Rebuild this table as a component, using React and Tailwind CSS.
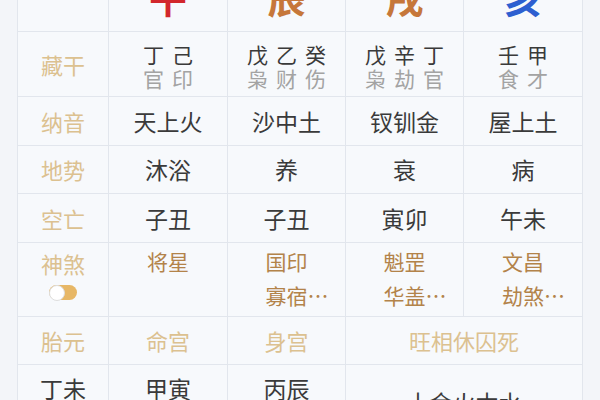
const line = "border-r border-b border-[#e2e6ed]";

function Cell({ children, className = "" }) {
  return (
    <div className={`${line} flex flex-col items-center justify-center ${className}`}>
      {children}
    </div>
  );
}

function Label({ children }) {
  return <Cell className="text-[22px] text-[#dcc190]">{children}</Cell>;
}

function Stems({ main, sub }) {
  return (
    <Cell className="h-[65px] pt-[4px] gap-[2px]">
      <div className="text-[21px] leading-[22px] tracking-[8px] mr-[-8px] text-[#3a3a3a] whitespace-nowrap">{main}</div>
      <div className="text-[21px] leading-[22px] tracking-[8px] mr-[-8px] text-[#a3a3a3] whitespace-nowrap">{sub}</div>
    </Cell>
  );
}

function Shensha({ items }) {
  return (
    <Cell className="justify-start pt-[6px] gap-[10px] text-[21px] leading-[24px] text-[#b3834a]">
      {items.map((t, i) => (
        <div key={i} className="whitespace-nowrap">
          {t}
          {i === 1 && <span className="mr-[-21px]">…</span>}
        </div>
      ))}
    </Cell>
  );
}

export default function App() {
  const pillars = [
    { zhi: "午", color: "text-[#d2272c]", stems: "丁己", gods: "官印", nayin: "天上火", dishi: "沐浴", kong: "子丑", sha: ["将星"] },
    { zhi: "辰", color: "text-[#c6773a]", stems: "戊乙癸", gods: "枭财伤", nayin: "沙中土", dishi: "养", kong: "子丑", sha: ["国印", "寡宿"] },
    { zhi: "戌", color: "text-[#c6773a]", stems: "戊辛丁", gods: "枭劫官", nayin: "钗钏金", dishi: "衰", kong: "寅卯", sha: ["魁罡", "华盖"] },
    { zhi: "亥", color: "text-[#2d5fd0]", stems: "壬甲", gods: "食才", nayin: "屋上土", dishi: "病", kong: "午未", sha: ["文昌", "劫煞"] },
  ];

  return (
    <div className="w-[600px] h-[400px] overflow-hidden bg-[#f3f5f9] font-['Noto_Sans_CJK_SC','Noto_Sans',sans-serif]">
      <div className="ml-[17px] w-[566px] grid grid-cols-[91px_119px_118px_118px_119px] border-l border-[#e2e6ed] bg-[#f7f9fc] text-[#3a3a3a]">
        {/* 地支 */}
        <div className={`${line} h-[32px]`} />
        {pillars.map((p) => (
          <div key={p.zhi} className={`${line} h-[32px] flex justify-center items-start overflow-hidden`}>
            <div className={`-mt-[22px] text-[38px] leading-none font-bold ${p.color}`}>{p.zhi}</div>
          </div>
        ))}

        {/* 藏干 */}
        <Label>藏干</Label>
        {pillars.map((p) => (
          <Stems key={p.zhi + "s"} main={p.stems} sub={p.gods} />
        ))}

        {/* 纳音 */}
        <Label>纳音</Label>
        {pillars.map((p) => (
          <Cell key={p.zhi + "n"} className="h-[49px] text-[23px]">{p.nayin}</Cell>
        ))}

        {/* 地势 */}
        <Label>地势</Label>
        {pillars.map((p) => (
          <Cell key={p.zhi + "d"} className="h-[48px] text-[23px]">{p.dishi}</Cell>
        ))}

        {/* 空亡 */}
        <Label>空亡</Label>
        {pillars.map((p) => (
          <Cell key={p.zhi + "k"} className="h-[49px] text-[23px]">{p.kong}</Cell>
        ))}

        {/* 神煞 */}
        <Cell className="h-[74px] justify-start pt-[7px] gap-[9px]">
          <div className="text-[22px] leading-[26px] text-[#dcc190]">神煞</div>
          <div className="w-[28px] h-[15px] rounded-full bg-[#e7b766] flex items-center">
            <div className="w-[16px] h-[16px] rounded-full bg-white border border-[#dedede]" />
          </div>
        </Cell>
        {pillars.map((p) => (
          <Shensha key={p.zhi + "x"} items={p.sha} />
        ))}

        {/* 胎元 */}
        <Cell className="h-[48px] text-[22px] text-[#dcc190]">胎元</Cell>
        <Cell className="text-[22px] text-[#dcc190]">命宫</Cell>
        <Cell className="text-[22px] text-[#dcc190]">身宫</Cell>
        <Cell className="col-span-2 text-[22px] text-[#dcc190]">旺相休囚死</Cell>

        {/* bottom */}
        <Cell className="h-[76px] justify-start pt-[8px] text-[23px] leading-[30px]">
          <div>丁未</div>
          <div>天河水</div>
        </Cell>
        <Cell className="justify-start pt-[8px] text-[23px] leading-[30px]">
          <div>甲寅</div>
          <div>大溪水</div>
        </Cell>
        <Cell className="justify-start pt-[8px] text-[23px] leading-[30px]">
          <div>丙辰</div>
          <div>沙中土</div>
        </Cell>
        <Cell className="col-span-2 text-[23px]">土金火木水</Cell>
      </div>
    </div>
  );
}
